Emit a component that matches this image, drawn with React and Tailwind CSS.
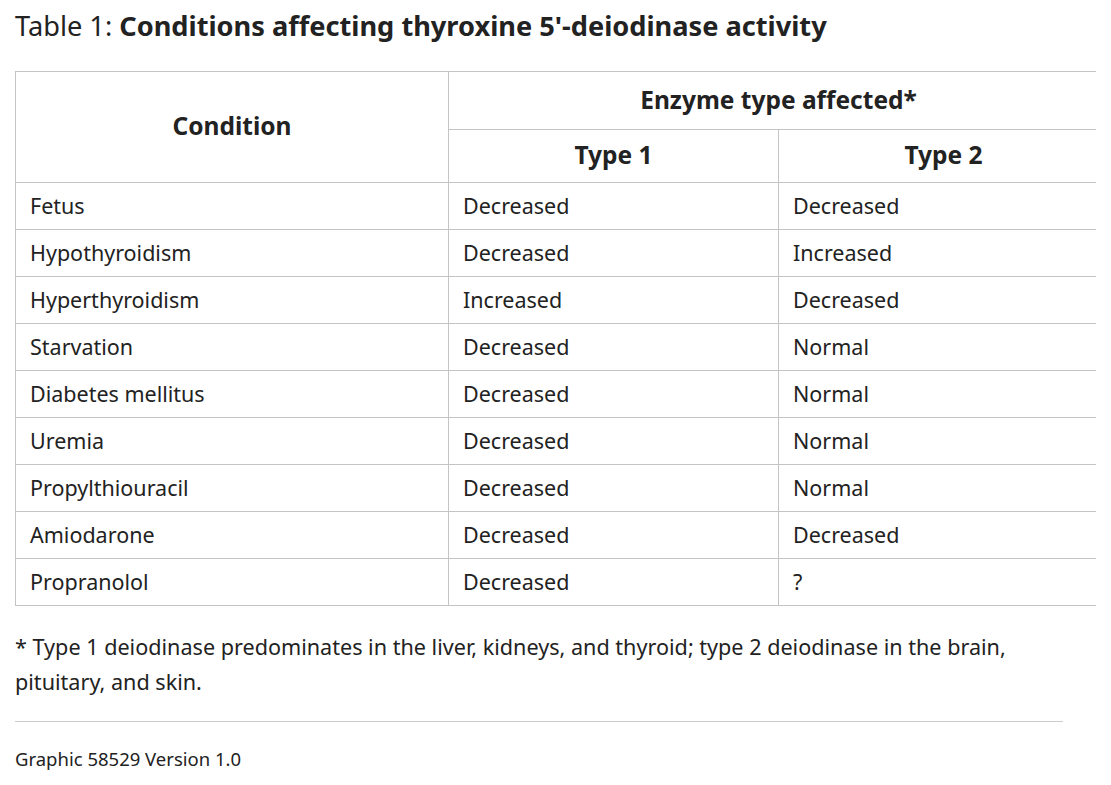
const rows = [
  ["Fetus", "Decreased", "Decreased"],
  ["Hypothyroidism", "Decreased", "Increased"],
  ["Hyperthyroidism", "Increased", "Decreased"],
  ["Starvation", "Decreased", "Normal"],
  ["Diabetes mellitus", "Decreased", "Normal"],
  ["Uremia", "Decreased", "Normal"],
  ["Propylthiouracil", "Decreased", "Normal"],
  ["Amiodarone", "Decreased", "Decreased"],
  ["Propranolol", "Decreased", "?"],
];

export default function App() {
  return (
    <div
      className="bg-white text-[#222] px-[15px] pt-[8px]"
      style={{ fontFamily: '"Noto Sans", "Open Sans", sans-serif' }}
    >
      <h1 className="text-[27.2px] leading-[36px] font-normal">
        Table 1: <span className="font-bold">Conditions affecting thyroxine 5'-deiodinase activity</span>
      </h1>

      <div className="mt-[27px] w-[1081px] overflow-hidden">
        <table className="w-[1093px] table-fixed border-collapse text-[21.5px]">
          <colgroup>
            <col className="w-[433px]" />
            <col className="w-[330px]" />
            <col className="w-[330px]" />
          </colgroup>
          <thead className="text-[24.5px] leading-[30px]">
            <tr className="h-[58px]">
              <th rowSpan={2} className="border border-[#c4c4c4] pb-[3px] font-bold text-center align-middle">
                Condition
              </th>
              <th colSpan={2} className="border border-[#c4c4c4] pb-[2px] font-bold text-center">
                Enzyme type affected*
              </th>
            </tr>
            <tr className="h-[53px]">
              <th className="border border-[#c4c4c4] pb-[2px] font-bold text-center">Type 1</th>
              <th className="border border-[#c4c4c4] pb-[2px] font-bold text-center">Type 2</th>
            </tr>
          </thead>
          <tbody>
            {rows.map((r) => (
              <tr key={r[0]} className="h-[47px]">
                {r.map((c, i) => (
                  <td key={i} className="border border-[#c4c4c4] px-[14px] leading-[28px] text-left">
                    {c}
                  </td>
                ))}
              </tr>
            ))}
          </tbody>
        </table>
      </div>

      <p className="mt-[23px] text-[21.6px] leading-[35px] w-[1040px]">
        * Type 1 deiodinase predominates in the liver, kidneys, and thyroid; type 2 deiodinase in the brain, pituitary, and skin.
      </p>

      <hr className="mt-[22px] w-[1048px] border-t border-[#cccccc]" />

      <p className="mt-[24px] text-[18.5px] leading-[26px]">Graphic 58529 Version 1.0</p>
    </div>
  );
}
